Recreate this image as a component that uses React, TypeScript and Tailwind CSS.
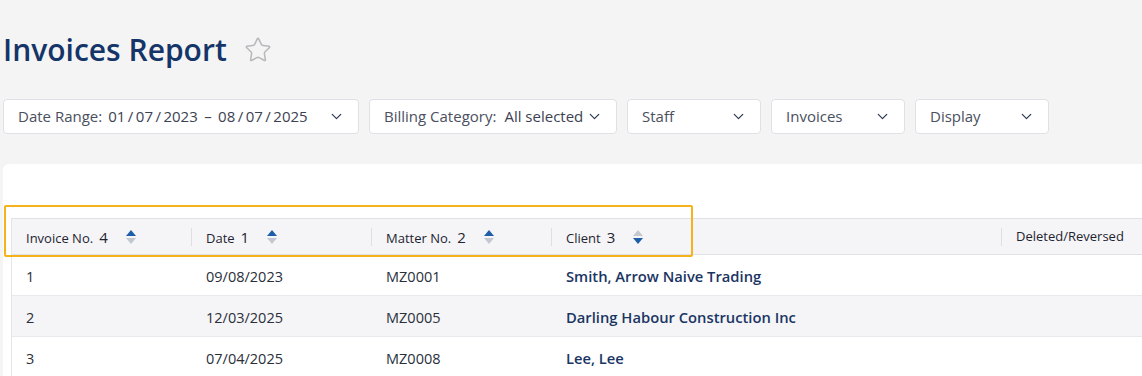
import { ChevronDown, Star } from "lucide-react";

const rows = [
  { no: "1", date: "09/08/2023", matter: "MZ0001", client: "Smith, Arrow Naive Trading" },
  { no: "2", date: "12/03/2025", matter: "MZ0005", client: "Darling Habour Construction Inc" },
  { no: "3", date: "07/04/2025", matter: "MZ0008", client: "Lee, Lee" },
];

function SortIcon({ dir }: { dir: "up" | "down" }) {
  return (
    <svg width="10" height="16" viewBox="0 0 10 16" className="shrink-0">
      <polygon points="5,1 10,7 0,7" fill={dir === "up" ? "#1d5ea8" : "#c3c8d0"} />
      <polygon points="0,9 10,9 5,15" fill={dir === "down" ? "#1d5ea8" : "#c3c8d0"} />
    </svg>
  );
}

function Filter({ width, children }: { width: string; children: React.ReactNode }) {
  return (
    <button
      className={`${width} h-[35px] flex items-center justify-between pl-[14px] pr-[13px] bg-white border border-[#dfe1e6] rounded-[4px] text-[15px] text-[#4a5060]`}
    >
      <span className="flex items-center whitespace-nowrap">{children}</span>
      <ChevronDown className="w-[17px] h-[17px] text-[#2c3a55]" strokeWidth={1.75} />
    </button>
  );
}

function HeadCell({ label, num, dir, first }: { label: string; num: string; dir: "up" | "down"; first?: boolean }) {
  return (
    <div className={`${first ? "w-[179px]" : "w-[180px]"} flex items-center`}>
      {!first && <div className="w-px h-[18px] bg-[#dcdfe4]" />}
      <span className="ml-[14px] flex items-baseline text-[#1f2430]">
        <span className="text-[13px] font-medium">{label}</span>
        <span className="ml-[6px] text-[15px]">{num}</span>
      </span>
      <span className="ml-[18px]">
        <SortIcon dir={dir} />
      </span>
    </div>
  );
}

export default function App() {
  return (
    <div
      className="relative w-[1142px] h-[376px] overflow-hidden bg-[#f4f4f5]"
      style={{ fontFamily: '"Open Sans", "Noto Sans", sans-serif' }}
    >
      {/* Title */}
      <div className="flex items-center pl-[3px] pt-[31px] h-[68px]">
        <h1 className="text-[30px] leading-[36px] font-semibold text-[#153569]">Invoices Report</h1>
        <Star className="ml-[17px] w-[28px] h-[28px] text-[#b8b8bc]" strokeWidth={1.3} />
      </div>

      {/* Filters */}
      <div className="flex gap-[10px] pl-[3px] mt-[31px]">
        <Filter width="w-[356px]">
          <span>Date Range:</span>
          <span className="ml-[6px] text-[#3c4252]">
            01{"\u2009/\u2009"}07{"\u2009/\u2009"}2023 {"\u2009–\u2009"} 08{"\u2009/\u2009"}07{"\u2009/\u2009"}2025
          </span>
        </Filter>
        <Filter width="w-[248px]">
          <span>Billing Category:</span>
          <span className="ml-[8px] text-[#3c4252]">All selected</span>
        </Filter>
        <Filter width="w-[134px]">Staff</Filter>
        <Filter width="w-[134px]">Invoices</Filter>
        <Filter width="w-[134px]">Display</Filter>
      </div>

      {/* Card */}
      <div className="ml-[3px] mt-[30px] bg-white rounded-tl-[6px] h-[240px] pt-[54px] pl-[8px]">
        <div className="border-l border-[#e3e5e9] h-full">
          <div className="flex items-center h-[37px] pt-[1px] bg-[#f5f5f7] border-t border-b border-[#dfe1e6]">
            <HeadCell label="Invoice No." num="4" dir="up" first />
            <HeadCell label="Date" num="1" dir="up" />
            <HeadCell label="Matter No." num="2" dir="up" />
            <HeadCell label="Client" num="3" dir="down" />
            <div className="w-[270px]" />
            <div className="flex items-center">
              <div className="w-px h-[18px] bg-[#dcdfe4]" />
              <span className="ml-[14px] text-[13px] text-[#1f2430] font-medium">Deleted/Reversed</span>
            </div>
          </div>
          {rows.map((r, i) => (
            <div
              key={r.no}
              className={`flex items-center h-[41px] pt-[3px] border-b border-[#e8e9ec] text-[14.5px] text-[#2a2f3a] ${
                i === 1 ? "bg-[#f5f5f7]" : "bg-white"
              }`}
            >
              <div className="w-[179px] pl-[14px]">{r.no}</div>
              <div className="w-[180px] pl-[15px]">{r.date}</div>
              <div className="w-[180px] pl-[15px]">{r.matter}</div>
              <div className="pl-[15px] text-[14.75px] font-semibold text-[#1b3563]">{r.client}</div>
            </div>
          ))}
        </div>
      </div>

      {/* Highlight box */}
      <div className="absolute left-[4px] top-[205px] w-[689px] h-[52px] border-2 border-[#f6b21a] rounded-[2px] pointer-events-none" />
    </div>
  );
}
